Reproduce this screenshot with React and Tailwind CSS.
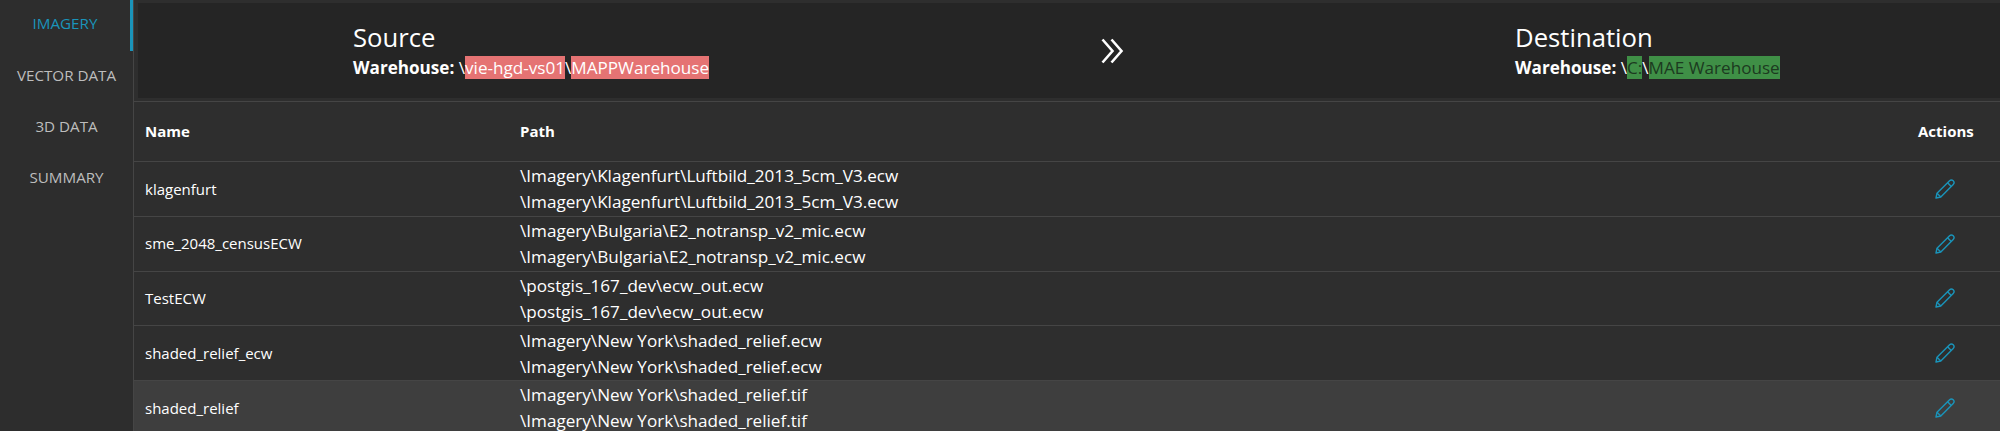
import React from "react";

const navItems = ["IMAGERY", "VECTOR DATA", "3D DATA", "SUMMARY"];

const rows = [
    { name: "klagenfurt", path: "\\Imagery\\Klagenfurt\\Luftbild_2013_5cm_V3.ecw" },
    { name: "sme_2048_censusECW", path: "\\Imagery\\Bulgaria\\E2_notransp_v2_mic.ecw" },
    { name: "TestECW", path: "\\postgis_167_dev\\ecw_out.ecw" },
    { name: "shaded_relief_ecw", path: "\\Imagery\\New York\\shaded_relief.ecw" },
    { name: "shaded_relief", path: "\\Imagery\\New York\\shaded_relief.tif", hovered: true },
];

const PencilIcon = () => (
    <svg width="20" height="20" viewBox="0 0 20 20" fill="none" stroke="#1a94ba" strokeWidth="1.4" strokeLinejoin="round">
        <path d="M1 19 L2 14.2 L14.6 1.8 a2.3 2.3 0 0 1 3.6 3.6 L5.8 18 Z" />
        <path d="M12.6 3.8 L16.2 7.4" />
        <path d="M2 14.2 L5.8 18" />
    </svg>
);

const App = () => {
    return (
        <div className="flex h-[431px] overflow-hidden bg-[#2e2e2e] text-white font-['Open_Sans',sans-serif]">
            <nav className="w-[134px] shrink-0 border-r border-[#454545] bg-[#2d2d2d]">
                {navItems.map((item, i) => (
                    <div
                        key={item}
                        className={`flex h-[51.3px] items-center justify-center text-[15.2px] pb-[4px] ${
                            i === 0 ? "border-r-[3px] border-[#1a94ba] text-[#1a94ba]" : "text-[#bdbdbd]"
                        }`}
                    >
                        {item}
                    </div>
                ))}
            </nav>

            <main className="flex-1 min-w-0">
                <div className="border-b border-[#454545] pl-[4px] pt-[3px] pb-[3px]">
                    <div className="flex h-[95px] items-center bg-[#252525]">
                        <div className="ml-[215px] w-[747px] pt-[2px]">
                            <div className="text-[25.68px] leading-[32px] mt-[-2px]">Source</div>
                            <div className="text-[17.12px] leading-[24px] mt-[2px]">
                                <b>Warehouse:</b> \<span className="bg-[#e57373]">vie-hgd-vs01</span>\<span className="bg-[#e57373]">MAPPWarehouse</span>
                            </div>
                        </div>
                        <svg width="24" height="26" viewBox="0 0 24 26" fill="none" stroke="#ffffff" strokeWidth="2.6" className="w-[24px] mr-[391px]">
                            <path d="M2.5 1.5 L12.5 13 L2.5 24.5" />
                            <path d="M11.5 1.5 L21.5 13 L11.5 24.5" />
                        </svg>
                        <div className="pt-[2px]">
                            <div className="text-[25.68px] leading-[32px] mt-[-2px]">Destination</div>
                            <div className="text-[17.12px] leading-[24px] mt-[2px]">
                                <b>Warehouse:</b> \<span className="bg-[#3f8f46] text-[#1c3a20]">C:</span>\<span className="bg-[#3f8f46] text-[#1c3a20]">MAE Warehouse</span>
                            </div>
                        </div>
                    </div>
                </div>

                <div className="grid h-[60px] grid-cols-[375px_1fr_82px] items-center border-b border-[#454545] pl-[11px] text-[15px] font-bold">
                    <div>Name</div>
                    <div>Path</div>
                    <div>Actions</div>
                </div>

                {rows.map((row) => (
                    <div
                        key={row.name}
                        className={`grid h-[54.75px] grid-cols-[375px_1fr_82px] items-center border-b border-[#454545] pl-[11px] text-[15px] ${
                            row.hovered ? "bg-[#3e3e3e]" : ""
                        }`}
                    >
                        <div>{row.name}</div>
                        <div className="text-[17.12px] leading-[26px] pt-[1px]">
                            <div>{row.path}</div>
                            <div>{row.path}</div>
                        </div>
                        <div className="pl-[17px]">
                            <PencilIcon />
                        </div>
                    </div>
                ))}
            </main>
        </div>
    );
};

export default App;
